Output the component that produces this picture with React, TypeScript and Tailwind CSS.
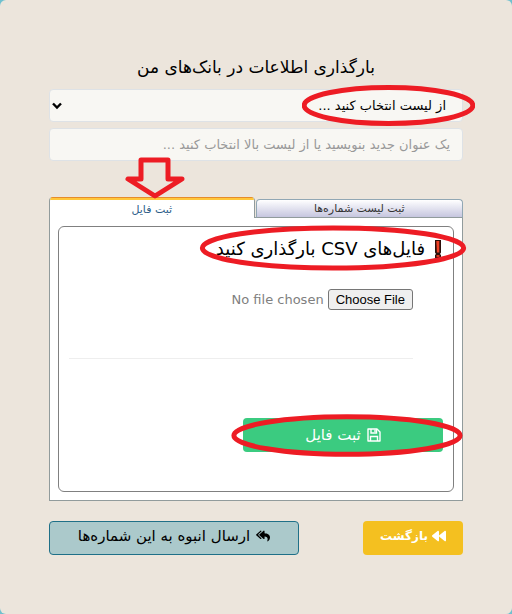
import { FaBackward, FaReplyAll } from "react-icons/fa";

function Ring({ className }: { className: string }) {
  return (
    <svg className={`absolute pointer-events-none ${className}`} viewBox="0 0 200 40" preserveAspectRatio="none" fill="none" aria-hidden="true">
      <ellipse cx="100" cy="20" rx="97.5" ry="17.5" stroke="#ed1c24" strokeWidth="5" vectorEffect="non-scaling-stroke" />
    </svg>
  );
}

function Arrow() {
  return (
    <svg className="absolute pointer-events-none -top-10 left-1/2 -translate-x-[27px] w-15 h-[42px]" viewBox="0 0 60 42" fill="none" aria-hidden="true">
      <path d="M16 3h27v19h14L30 39 3 22h13z" stroke="#ed1c24" strokeWidth="5" strokeLinejoin="round" />
    </svg>
  );
}

function SaveIcon() {
  return (
    <svg className="size-3.5" viewBox="0 0 14 14" fill="none" stroke="currentColor" strokeWidth="1.4" aria-hidden="true">
      <path d="M1 1h9l3 3v9H1z" strokeLinejoin="round" />
      <path d="M4 1v4h5.5V1M3.5 13V8.5h7V13" />
      <path d="M8 1.5v2.5" />
    </svg>
  );
}

export default function App() {
  return (
    <div className="bg-[#6fc0cf] font-['DejaVu_Sans',sans-serif]">
      <main dir="rtl" lang="fa" className="min-h-screen rounded-md bg-[#ece5dc] px-[49px] pt-[53px] pb-8 text-black">
        <h1 className="text-center text-[17px] leading-7">بارگذاری اطلاعات در بانک‌های من</h1>

        <form>
          <div className="relative mt-2">
            <select
              aria-label="لیست بانک‌ها"
              className="block w-full h-[33px] appearance-none rounded border border-[#dee2e6] bg-[#f8f7f3] pr-4 pl-8 text-[13px]"
            >
              <option>از لیست انتخاب کنید ...</option>
            </select>
            <svg className="absolute left-0.5 top-3 w-3 h-2.5 pointer-events-none" viewBox="0 0 12 10" fill="none" aria-hidden="true">
              <path d="M2 2.5 6 6.5 10 2.5" stroke="#000" strokeWidth="2.4" />
            </svg>
            <Ring className="-top-1 -right-3 w-[173px] h-[41px]" />
          </div>
          <input
            type="text"
            aria-label="عنوان جدید"
            placeholder="یک عنوان جدید بنویسید یا از لیست بالا انتخاب کنید ..."
            className="mt-1.5 block w-full h-[33px] rounded border border-[#dee2e6] bg-[#f8f7f3] px-3 text-[13px] placeholder:text-[#999]"
          />

          <div role="tablist" className="mt-9 flex items-end">
            <button
              type="button"
              role="tab"
              aria-selected="false"
              className="flex-1 h-[19px] rounded-t border border-[#91a7b4] border-b-[#919b9c] bg-linear-to-b from-white to-[#c6c6df] text-[11px] leading-4 text-[#333]"
            >
              ثبت لیست شماره‌ها
            </button>
            <div className="w-px h-px bg-[#919b9c]" />
            <div className="relative flex-1">
              <button
                type="button"
                role="tab"
                aria-selected="true"
                className="relative block w-full h-[21px] overflow-hidden rounded-t border-x border-[#919b9c] bg-white pt-1 text-[11px] leading-4 text-[#2e5f8a]"
              >
                <span className="absolute inset-x-0 top-0 h-[3px] border-t border-[#e68b2c] bg-[#ffc73c]" />
                ثبت فایل
              </button>
              <Arrow />
            </div>
          </div>

          <section role="tabpanel" aria-label="ثبت فایل" className="border border-t-0 border-[#919b9c] bg-white p-2">
            <div className="rounded-md border border-[#808080] px-2.5 pt-1.5 pb-[39px]">
              <div className="relative">
                <p className="flex items-center gap-2.5 text-[18px] leading-8">
                  <svg className="mr-0.5 w-1.5 h-5" viewBox="0 0 6 20" aria-hidden="true">
                    <path d="M0 1h6v12.5L5 15l1 1v3H0v-3l1-1-1-1.5z" fill="#2b0f0b" />
                    <path d="M1.3 2h3v11.5h-2.4z" fill="#ee4125" />
                    <rect x="1.5" y="16" width="3" height="2" fill="#d8391f" />
                  </svg>
                  <span>فایل‌های CSV بارگذاری کنید</span>
                </p>
                <Ring className="-top-2 -right-6 w-[268px] h-[46px]" />
              </div>
              <div className="mr-[30px] mt-6 border-b border-[#eee] pb-12">
                <input
                  type="file"
                  dir="rtl"
                  aria-label="انتخاب فایل"
                  className="block w-full h-[21px] text-[13px] leading-5 text-[#808080] file:ml-1 file:h-[21px] file:rounded-[3px] file:border file:border-solid file:border-[#767676] file:bg-[#efefef] file:px-[7px] file:font-['Liberation_Sans',Arial,sans-serif] file:text-[13px] file:leading-4 file:text-black"
                />
              </div>
              <div className="relative mt-[59px] w-[200px]">
                <button type="submit" className="flex h-[34px] w-full items-center justify-center gap-1.5 rounded bg-[#3bcb80] text-[15px] text-white">
                  <SaveIcon />
                  ثبت فایل
                </button>
                <Ring className="-top-1 -right-5 w-[232px] h-[43px]" />
              </div>
            </div>
          </section>
        </form>

        <div className="mt-5 flex justify-between">
          <button type="button" className="flex h-[34px] w-[100px] items-center justify-center gap-1 rounded bg-[#f4c020] pb-1 text-[12px] font-bold text-white">
            <FaBackward className="size-3.5" />
            بازگشت
          </button>
          <button type="button" className="flex h-[34px] w-[250px] items-center justify-center gap-1.5 rounded border border-[#1f7088] bg-[#abc9cb] pb-1 text-[15px]">
            <FaReplyAll className="size-3.5" />
            ارسال انبوه به این شماره‌ها
          </button>
        </div>
      </main>
    </div>
  );
}
